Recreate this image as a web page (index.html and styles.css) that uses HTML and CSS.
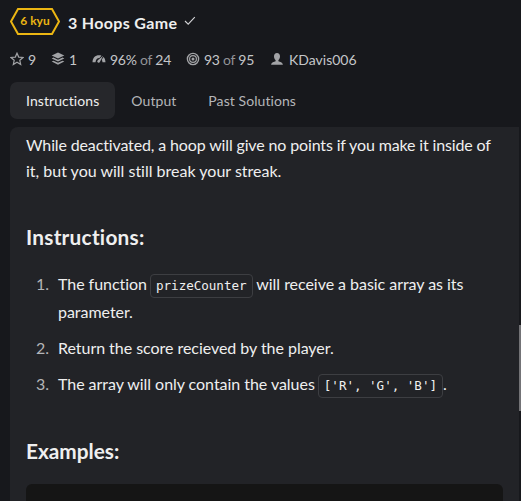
FILE: index.html
```
<!DOCTYPE html>
<html lang="en">
<head>
<meta charset="utf-8">
<title>3 Hoops Game</title>
<link rel="stylesheet" href="styles.css">
</head>
<body>
<header class="title-row">
  <div class="rank">
    <svg class="rank-shape" width="50" height="27" viewBox="0 0 50 27"><path d="M8 1H42L49 13.5L42 26H8L1 13.5Z" fill="none" stroke="#ecb613" stroke-width="2"/></svg>
    <span>6 kyu</span>
  </div>
  <h1>3 Hoops Game</h1>
  <svg class="check" width="12" height="10" viewBox="0 0 12 10"><path d="M1 5L4.2 8.2L10.8 1.2" fill="none" stroke="#d2d2d5" stroke-width="1.1"/></svg>
</header>
<div class="stats">
  <div class="stat stars"><svg width="14" height="14" viewBox="0 0 14 14"><path d="M7 1.2L8.7 5.1L13 5.5L9.8 8.3L10.7 12.5L7 10.3L3.3 12.5L4.2 8.3L1 5.5L5.3 5.1Z" fill="none" stroke="#a2a3a6" stroke-width="1.2"/></svg><span>9</span></div>
  <div class="stat collections"><svg width="14" height="14" viewBox="0 0 14 14" fill="#a2a3a6"><path d="M7 .6L13.3 3.6L7 6.6L.7 3.6Z"/><path d="M.7 6.4L2.5 5.6L7 7.7L11.5 5.6L13.3 6.4L7 9.6Z"/><path d="M.7 9.5L2.5 8.7L7 10.8L11.5 8.7L13.3 9.5L7 12.7Z"/></svg><span>1</span></div>
  <div class="stat rating"><svg width="14" height="14" viewBox="0 0 14 14"><path d="M.5 10.2C.7 5.9 3.2 3.3 7 3.3C8 3.3 8.7 3.4 9.5 3.8L7.4 6C5.1 6 4 7.3 3.5 10.2ZM11.5 5C12.8 6.2 13.4 8 13.5 10.2H10.5C10.4 9.1 10.1 8.3 9.7 7.7Z" fill="#a2a3a6"/><path d="M11.1 3.7L8 9.8A1.4 1.4 0 1 1 5.8 8.2Z" fill="#a2a3a6"/></svg><span>96% <i>of</i> 24</span></div>
  <div class="stat completed"><svg width="14" height="14" viewBox="0 0 14 14" fill="none" stroke="#a2a3a6"><circle cx="7" cy="7" r="5.6" stroke-width="1.4"/><circle cx="7" cy="7" r="3.4" stroke-width="1.2"/><circle cx="7" cy="7" r="1.5" fill="#a2a3a6" stroke="none"/></svg><span>93 <i>of</i> 95</span></div>
  <div class="stat author"><svg width="14" height="14" viewBox="0 0 14 14"><path d="M7 1C8.9 1 10 2.3 10 4.2C10 6 9.3 7.2 8.4 8.1V9.2C10 9.8 12.6 10.1 12.9 12.7H1.1C1.4 10.1 4 9.8 5.6 9.2V8.1C4.7 7.2 4 6 4 4.2C4 2.3 5.1 1 7 1Z" fill="#a2a3a6"/></svg><span>KDavis006</span></div>
</div>
<nav class="tabs">
  <a class="tab active">Instructions</a>
  <a class="tab">Output</a>
  <a class="tab">Past Solutions</a>
</nav>
<main class="panel">
  <p><span class="tight">While deactivated, a hoop will give no points if you make it inside of</span> it, but you will still break your streak.</p>
  <h2 class="instructions">Instructions:</h2>
  <ol>
    <li>The function <code>prizeCounter</code> will receive a basic array as its parameter.</li>
    <li>Return the score recieved by the player.</li>
    <li>The array will only contain the values <code>['R', 'G', 'B']</code>.</li>
  </ol>
  <h2 class="examples">Examples:</h2>
  <div class="code-block"></div>
</main>
<div class="scroll-thumb"></div>
</body>
</html>
```
FILE: styles.css
```
* { box-sizing: border-box; }
body {
  margin: 0;
  height: 501px;
  overflow: hidden;
  background: #17181c;
  color: #efefef;
  font-family: Lato, "Liberation Sans", sans-serif;
  font-size: 16px;
  font-variant-ligatures: none;
}
svg { display: block; flex: none; }
.title-row { display: flex; height: 42px; padding: 8px 0 0 10px; }
.rank {
  position: relative;
  width: 50px;
  height: 27px;
  color: #ecb613;
  font-size: 12px;
  font-weight: 700;
  line-height: 26px;
  text-align: center;
}
.rank-shape { position: absolute; left: 0; top: 0; }
h1 { margin: 0 0 0 8px; font-size: 16px; letter-spacing: 0.33px; line-height: 29px; font-weight: 700; white-space: nowrap; }
.check { margin: 8px 0 0 7px; }
.stats { display: flex; height: 40px; padding: 8px 0 0 10px; color: #c5c6c9; font-size: 14px; line-height: 20px; white-space: nowrap; }
.stat { display: flex; gap: 4px; }
.stat svg { margin-top: 2px; }
.stat i { font-style: normal; color: #929397; }
.stars { width: 41px; }
.collections { width: 41px; }
.rating { width: 94px; letter-spacing: -0.25px; }
.completed { width: 84px; letter-spacing: -0.25px; }
.author { gap: 5px; }
.tabs { display: flex; height: 45px; font-size: 14px; line-height: 37px; padding-left: 10px; color: #b4b5b8; letter-spacing: 0.07px; }
.tab { height: 37px; padding: 0 16px; border-radius: 7px; white-space: nowrap; }
.active { background: #26272b; color: #efefef; }
.panel {
  width: 509px;
  height: 374px;
  margin-left: 10px;
  padding: 5px 16px 0;
  border-radius: 8px 0 0;
  background: #222327;
  overflow: hidden;
}
p { margin: 0; line-height: 26px; }
.tight { letter-spacing: -0.14px; }
h2 { margin: 38px 0 0; font-size: 20.8px; line-height: 30px; font-weight: 700; }
.instructions { letter-spacing: 0.25px; }
ol { margin: 18px 0 0; padding-left: 32px; line-height: 28px; list-style: none; counter-reset: step; letter-spacing: -0.04px; }
li { position: relative; counter-increment: step; margin-bottom: 8px; }
li::before { content: counter(step) "."; position: absolute; left: -22px; color: #b4b5b8; }
code {
  display: inline-block;
  height: 24px;
  margin: 0 0 0 -1px;
  padding: 0 5px;
  border: 1px solid #3d3e42;
  border-radius: 4px;
  font-family: "DejaVu Sans Mono", monospace;
  font-size: 12.6px;
  line-height: 22px;
}
code + code { margin-left: 0; }
h2.examples { margin-top: 38px; }
.code-block { height: 40px; margin-top: 18px; border-radius: 6px; background: #151515; }
.scroll-thumb { position: absolute; left: 519px; top: 325px; width: 2px; height: 86px; background: #737376; }
```
